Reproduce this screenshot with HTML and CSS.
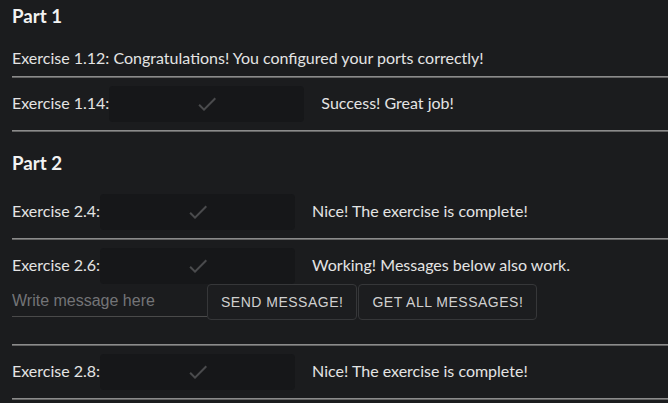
FILE: index.html
```html
<!DOCTYPE html>
<html>
<head>
<meta charset="utf-8">
<link rel="stylesheet" href="styles.css">
</head>
<body>
<div class="page">
  <h3 class="part part-first">Part 1</h3>
  <div class="line">Exercise 1.12: Congratulations! You configured your ports correctly!</div>
  <hr class="sep">
  <div class="row">
    <span class="label">Exercise 1.14:</span>
    <span class="tick"><svg viewBox="0 0 24 24" width="24" height="24"><path d="M9 16.17 4.83 12l-1.42 1.41L9 19 21 7l-1.41-1.41z"/></svg></span>
    <span class="msg">Success! Great job!</span>
  </div>
  <hr class="sep">
  <h3 class="part">Part 2</h3>
  <div class="row">
    <span class="label">Exercise 2.4:</span>
    <span class="tick"><svg viewBox="0 0 24 24" width="24" height="24"><path d="M9 16.17 4.83 12l-1.42 1.41L9 19 21 7l-1.41-1.41z"/></svg></span>
    <span class="msg">Nice! The exercise is complete!</span>
  </div>
  <hr class="sep">
  <div class="block">
    <div class="row row-tight">
      <span class="label">Exercise 2.6:</span>
      <span class="tick"><svg viewBox="0 0 24 24" width="24" height="24"><path d="M9 16.17 4.83 12l-1.42 1.41L9 19 21 7l-1.41-1.41z"/></svg></span>
      <span class="msg">Working! Messages below also work.</span>
    </div>
    <div class="form">
      <input class="field" type="text" placeholder="Write message here">
      <button class="btn">SEND MESSAGE!</button>
      <button class="btn">GET ALL MESSAGES!</button>
    </div>
  </div>
  <hr class="sep">
  <div class="row">
    <span class="label">Exercise 2.8:</span>
    <span class="tick"><svg viewBox="0 0 24 24" width="24" height="24"><path d="M9 16.17 4.83 12l-1.42 1.41L9 19 21 7l-1.41-1.41z"/></svg></span>
    <span class="msg">Nice! The exercise is complete!</span>
  </div>
  <hr class="sep">
</div>
</body>
</html>
```
FILE: styles.css
```css
html, body {
  margin: 0;
  padding: 0;
  background: #1b1c1e;
}
body {
  font-family: Lato, "Noto Sans", sans-serif;
  font-size: 16px;
  color: #e4e4e4;
  overflow: hidden;
}
.page {
  padding-left: 12px;
}
.part {
  margin: 0;
  font-size: 18.72px;
  font-weight: 700;
  color: #f2f2f2;
  height: 45px;
  padding-top: 9px;
  line-height: 45px;
}
.part-first {
  height: 33px;
  padding-top: 0;
  line-height: 33px;
}
.line {
  padding-top: 13px;
  padding-bottom: 7px;
  line-height: 23px;
}
.sep {
  margin: 0;
  border: 0;
  border-top: 1px solid #8b8b8b;
  border-bottom: 1px solid #636363;
  height: 0;
}
.row {
  display: flex;
  align-items: center;
  padding: 8px 0;
  line-height: 20px;
}
.row-tight {
  padding-bottom: 0;
}
.label {
  margin-top: -3px;
}
.tick {
  width: 195px;
  height: 36px;
  margin-left: 0;
  margin-right: 17px;
  border-radius: 4px;
  background: #161719;
  display: flex;
  align-items: center;
  justify-content: center;
}
.tick svg {
  fill: #4a4b4d;
}
.msg {
  margin-top: -3px;
}
.block {
  padding-bottom: 24px;
}
.form {
  display: flex;
  align-items: flex-start;
}
.field {
  box-sizing: border-box;
  width: 195px;
  height: 33px;
  margin: 0;
  padding: 2px 0 0 0;
  border: 0;
  border-bottom: 1px solid #4a4a4a;
  background: transparent;
  font-family: "Liberation Sans", Arial, sans-serif;
  font-size: 16px;
  color: #ddd;
  outline: none;
}
.field::placeholder {
  color: #737477;
}
.btn {
  box-sizing: border-box;
  height: 36px;
  margin: 0;
  padding: 0 13px;
  border: 1px solid #363739;
  border-radius: 4px;
  background: #1c1d1f;
  font-family: "Liberation Sans", Arial, sans-serif;
  font-size: 14px;
  letter-spacing: 0.5px;
  color: #d0d0d0;
  line-height: 16px;
}
.btn + .btn {
  margin-left: 1px;
}
```
